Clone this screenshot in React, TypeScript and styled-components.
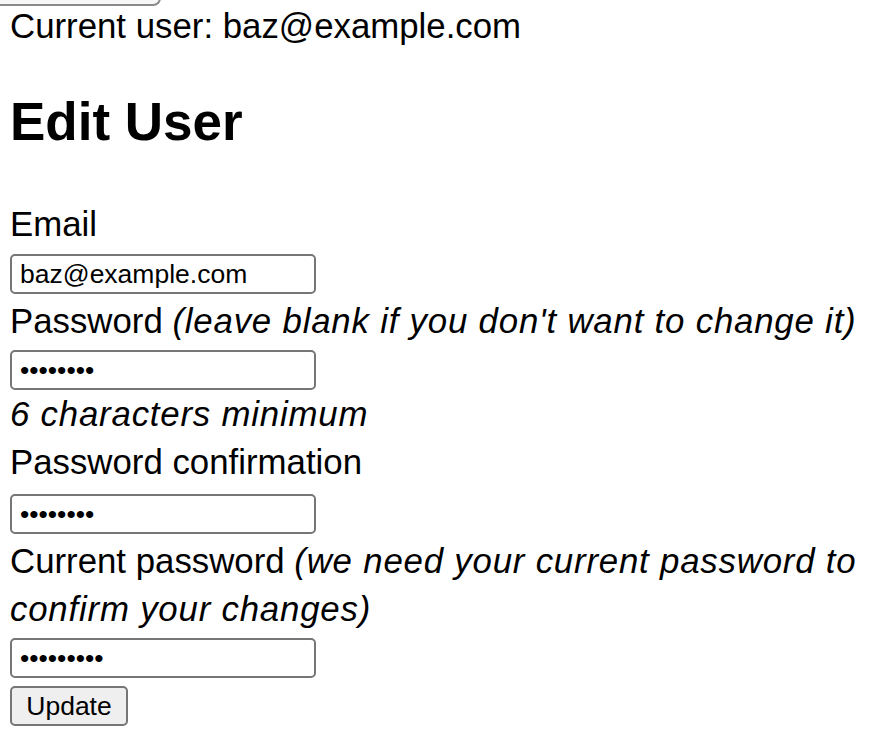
import styled, { createGlobalStyle } from "styled-components";

const GlobalStyle = createGlobalStyle`
  html, body {
    margin: 0;
    padding: 0;
    background: #fff;
  }
  body {
    font-family: "Liberation Sans", Arial, sans-serif;
    color: #000;
  }
`;

const Page = styled.div`
  padding: 0 10px;
  font-size: 34.8px;
  line-height: 48px;
`;

// bottom edge of a button that is scrolled out of view
const ScrolledButton = styled.div`
  width: 167px;
  height: 6px;
  margin: -2px 0 -4px -20px;
  border: 2px solid #8a8a8a;
  border-top: none;
  border-radius: 0 0 12px 12px;
  background: #f7f7f7;
`;

const CurrentUser = styled.p`
  margin: 0;
`;

const Heading = styled.h1`
  margin: 43px 0 49px;
  font-size: 53px;
  line-height: 58px;
  font-weight: 700;
`;

const Form = styled.form`
  display: flex;
  flex-direction: column;
  align-items: flex-start;
`;

const Label = styled.label`
  display: block;
  white-space: pre-wrap;
`;

const Hint = styled.em`
  font-style: italic;
  letter-spacing: 0.8px;
`;

const Note = styled.em`
  display: block;
  font-style: italic;
  letter-spacing: 0.8px;
`;

const Input = styled.input<{ $gap?: number }>`
  box-sizing: border-box;
  width: 306px;
  height: 40px;
  margin: ${(p) => p.$gap ?? 6}px 0 0;
  padding: 2px 8px;
  border: 2px solid #767676;
  border-radius: 5px;
  font-family: "Liberation Sans", Arial, sans-serif;
  font-size: 26.5px;
  color: #000;
  background: #fff;
  outline: none;
`;

const Field = styled.div<{ $gap?: number }>`
  display: flex;
  flex-direction: column;
  align-items: flex-start;
  margin-top: ${(p) => p.$gap ?? 0}px;
`;

const SubmitButton = styled.button`
  box-sizing: border-box;
  width: 118px;
  height: 40px;
  margin-top: 8px;
  padding: 0 10px;
  border: 2px solid #767676;
  border-radius: 5px;
  background: #efefef;
  font-family: "Liberation Sans", Arial, sans-serif;
  font-size: 26.5px;
  color: #000;
`;

export default function App() {
  return (
    <>
      <GlobalStyle />
      <Page>
        <ScrolledButton />
        <CurrentUser>Current user: baz@example.com</CurrentUser>
        <Heading>Edit User</Heading>
        <Form onSubmit={(e) => e.preventDefault()}>
          <Field>
            <Label htmlFor="email">Email</Label>
            <Input id="email" type="email" defaultValue="baz@example.com" />
          </Field>
          <Field $gap={3}>
            <Label htmlFor="password">
              Password <Hint>(leave blank if you don't want to change it)</Hint>
            </Label>
            <Input id="password" type="password" defaultValue="12345678" $gap={5} />
            <Note>6 characters minimum</Note>
          </Field>
          <Field>
            <Label htmlFor="password_confirmation">Password confirmation</Label>
            <Input
              id="password_confirmation"
              type="password"
              defaultValue="12345678"
              $gap={8}
            />
          </Field>
          <Field $gap={3}>
            <Label htmlFor="current_password">
              Current password{" "}
              <Hint>(we need your current password to confirm your changes)</Hint>
            </Label>
            <Input
              id="current_password"
              type="password"
              defaultValue="123456789"
              $gap={5}
            />
          </Field>
          <SubmitButton type="submit">Update</SubmitButton>
        </Form>
      </Page>
    </>
  );
}
